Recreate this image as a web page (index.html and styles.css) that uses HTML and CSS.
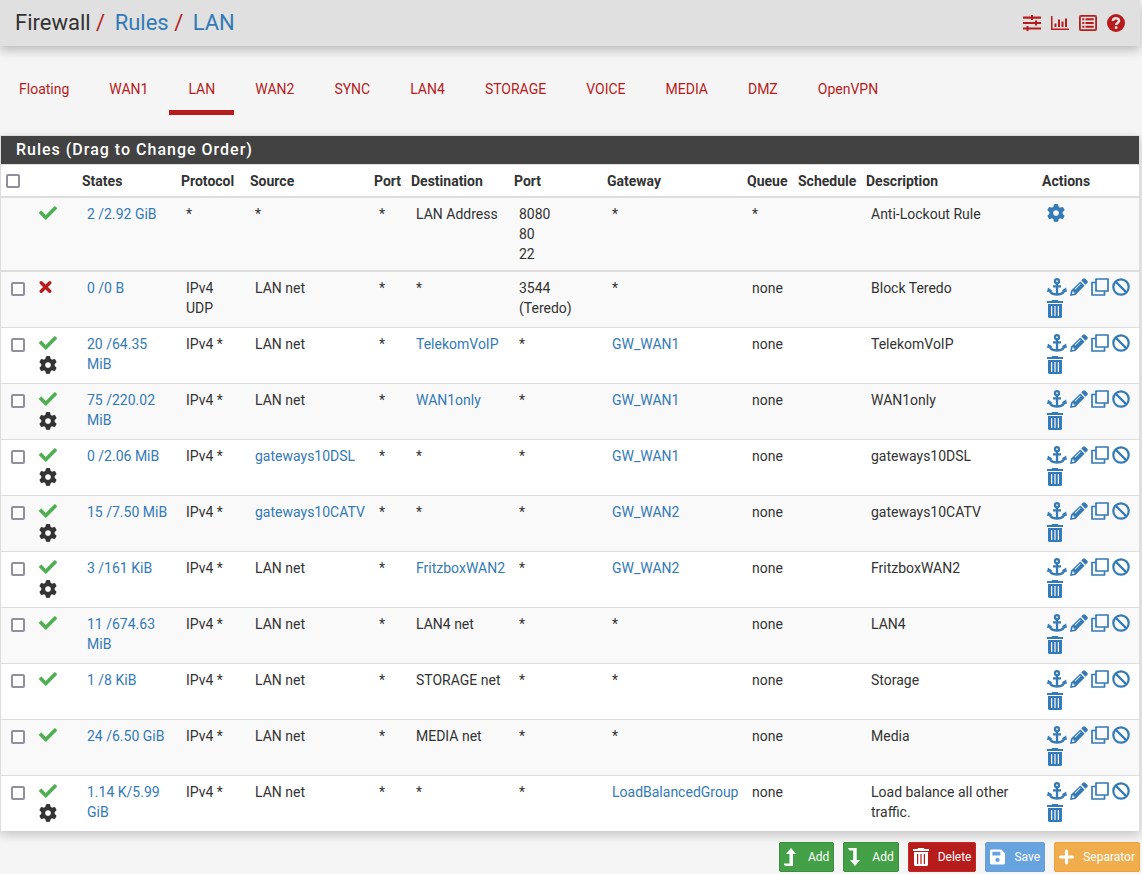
FILE: index.html
```html
<!DOCTYPE html>
<html lang="en">
<head>
<meta charset="utf-8">
<title>Firewall: Rules: LAN</title>
<link rel="stylesheet" href="styles.css">
</head>
<body>
<svg class="sprite" aria-hidden="true">
  <symbol id="check" viewBox="0 0 512 512"><path d="M173.898 439.404l-166.4-166.400c-9.997-9.997-9.997-26.206 0-36.204l36.203-36.204c9.997-9.998 26.207-9.998 36.204 0L192 312.690 432.095 72.596c9.997-9.997 26.207-9.997 36.204 0l36.203 36.204c9.997 9.997 9.997 26.206 0 36.204l-294.400 294.401c-9.998 9.997-26.207 9.997-36.204-.001z"/></symbol>
  <symbol id="times" viewBox="0 0 14 14"><path d="M2.400 2.400 11.600 11.600M11.600 2.400 2.400 11.600" fill="none" stroke="currentColor" stroke-width="3.600" stroke-linecap="round"/></symbol>
  <symbol id="gear" viewBox="0 0 512 512"><path d="M495.9 166.6c3.2 8.7 .5 18.4-6.4 24.6l-43.3 39.4c1.1 8.3 1.7 16.8 1.7 25.4s-.6 17.1-1.7 25.4l43.3 39.4c6.9 6.2 9.6 15.9 6.4 24.6c-4.4 11.9-9.7 23.3-15.8 34.3l-4.7 8.1c-6.6 11-14 21.4-22.1 31.2c-5.9 7.2-15.7 9.6-24.5 6.8l-55.7-17.7c-13.4 10.3-28.2 18.9-44 25.4l-12.5 57.1c-2 9.1-9 16.3-18.2 17.8c-13.8 2.3-28 3.5-42.5 3.5s-28.7-1.2-42.5-3.5c-9.2-1.5-16.2-8.7-18.2-17.8l-12.5-57.1c-15.8-6.5-30.6-15.1-44-25.4L83.1 425.9c-8.8 2.8-18.6 .3-24.5-6.8c-8.1-9.8-15.5-20.2-22.1-31.2l-4.7-8.1c-6.1-11-11.4-22.4-15.8-34.3c-3.2-8.7-.5-18.4 6.4-24.6l43.3-39.4C64.6 273.1 64 264.6 64 256s.6-17.1 1.7-25.4L22.4 191.2c-6.9-6.2-9.6-15.9-6.4-24.6c4.4-11.9 9.7-23.3 15.8-34.3l4.7-8.1c6.6-11 14-21.4 22.1-31.2c5.9-7.2 15.7-9.6 24.5-6.8l55.7 17.7c13.4-10.3 28.2-18.9 44-25.4l12.5-57.1c2-9.1 9-16.3 18.2-17.8C227.3 1.2 241.5 0 256 0s28.7 1.2 42.5 3.5c9.2 1.5 16.2 8.7 18.2 17.8l12.5 57.1c15.8 6.5 30.6 15.1 44 25.4l55.7-17.7c8.8-2.8 18.6-.3 24.5 6.8c8.1 9.8 15.5 20.2 22.1 31.2l4.7 8.1c6.1 11 11.4 22.4 15.8 34.3zM256 336a80 80 0 1 0 0-160 80 80 0 1 0 0 160z"/></symbol>
  <symbol id="anchor" viewBox="0 0 20 18"><g fill="none" stroke="currentColor" stroke-width="2.300"><circle cx="10" cy="3.200" r="2"/><path d="M10 5v11.500M6 8.300h8M2.300 11.500c.5 3 3.200 5 7.700 5s7.200-2 7.700-5"/></g><path d="M0 14 1 9.500l4.500 3.500zM20 14l-1-4.500-4.500 3.500z"/></symbol>
  <symbol id="pencil" viewBox="0 0 18 18"><path d="M13 .7a1.600 1.600 0 0 1 2.200 0l2.100 2.100a1.600 1.600 0 0 1 0 2.200L15.500 6.800 11.200 2.500zM10.300 3.400l4.300 4.300-9.200 9.200L0 18l1.100-5.400zM2.500 13.400 2 15.500l.5.500 2.100-.5v-1.100H3.600v-1zM5.300 11.600l5.500-5.500-.7-.7-5.500 5.500z" fill-rule="evenodd"/></symbol>
  <symbol id="clone" viewBox="0 0 18 18"><path d="M5 1h12v12H5zM4.500 4.500H1V17h12.500v-3.500" fill="none" stroke="currentColor" stroke-width="1.700" stroke-linejoin="round"/></symbol>
  <symbol id="ban" viewBox="0 0 18 18"><g fill="none" stroke="currentColor" stroke-width="2.200"><circle cx="9" cy="9" r="7.700"/><path d="m3.600 3.600 10.800 10.800"/></g></symbol>
  <symbol id="trash" viewBox="0 0 16 18"><path d="M4.500 1 5.200 0h5.600l.7 1H16v2H0V1zM1 4h14v12.500a1.500 1.500 0 0 1-1.500 1.500h-11A1.500 1.500 0 0 1 1 16.500zM4 6v10h1.200V6zM7.400 6v10h1.200V6zM10.800 6v10H12V6z" fill-rule="evenodd"/></symbol>
  <symbol id="sliders" viewBox="0 0 18 18"><path d="M0 2.500h8V1h2v1.500h8v2.200h-8V6H8V4.700H0zM0 7.900h12V6.500h2v1.400h4v2.200h-4v1.400h-2v-1.400H0zM0 13.400h3.500V12h2v1.400H18v2.200H5.500V17h-2v-1.400H0z"/></symbol>
  <symbol id="chart" viewBox="0 0 18 18"><path d="M0 2h1.500v12.500H18V16H0zM3.500 9.500h2V13h-2zM7 5.500h2V13H7zM10.500 7.500h2V13h-2zM14 4.500h2V13h-2z"/></symbol>
  <symbol id="list" viewBox="0 0 18 18"><rect x=".9" y="1.900" width="16.200" height="14.200" rx="1" fill="none" stroke="currentColor" stroke-width="1.800"/><path d="M3.300 4.200h2v2h-2zM6.500 4.200h8.200v2H6.500zM3.300 8h2v2h-2zM6.500 8h8.200v2H6.500zM3.300 11.800h2v2h-2zM6.500 11.800h8.200v2H6.500z"/></symbol>
  <symbol id="help" viewBox="0 0 18 18"><circle cx="9" cy="9" r="9"/><path d="M5.900 7C6 3.300 12 3.500 12 6.700c0 2.200-2.900 2.200-2.900 4.200" fill="none" stroke="#e0e0e0" stroke-width="2.500"/><path d="M7.800 12.300h2.600v2.500H7.800z" fill="#e0e0e0"/></symbol>
  <symbol id="up" viewBox="0 0 15 18"><path d="M7 0l5 6H9v12H1l-1.500-2.500H5.500V6H2z"/></symbol>
  <symbol id="down" viewBox="0 0 15 18"><path d="M0 0h8.700v12H12l-5 6-5-6h3.200V2.500H1.500z"/></symbol>
  <symbol id="save" viewBox="0 0 16 16"><path d="M1.500 0H12l4 4v10.500a1.500 1.500 0 0 1-1.500 1.500h-13A1.500 1.500 0 0 1 0 14.500v-13A1.500 1.500 0 0 1 1.500 0zM2.500 2.500v4H11v-4zM8 8.800a2.300 2.300 0 1 0 0 4.600 2.300 2.300 0 1 0 0-4.600z" fill-rule="evenodd"/></symbol>
  <symbol id="plus" viewBox="0 0 16 16"><path d="M8 1.800v12.400M1.800 8h12.400" fill="none" stroke="currentColor" stroke-width="3.400" stroke-linecap="round"/></symbol>
</svg>

<header class="topbar">
  <h1 class="crumbs">Firewall <span class="slash">/</span> <a href="#">Rules</a> <span class="slash">/</span> <a href="#">LAN</a></h1>
  <nav class="tools" aria-label="Page tools">
    <a href="#" aria-label="Settings"><svg><use href="#sliders"/></svg></a>
    <a href="#" aria-label="Status"><svg><use href="#chart"/></svg></a>
    <a href="#" aria-label="Logs"><svg><use href="#list"/></svg></a>
    <a href="#" aria-label="Help"><svg><use href="#help"/></svg></a>
  </nav>
</header>

<nav class="tabs" aria-label="Interfaces">
  <a href="#">Floating</a><a href="#">WAN1</a><a href="#" class="active" aria-current="page">LAN</a><a href="#">WAN2</a><a href="#">SYNC</a><a href="#">LAN4</a><a href="#">STORAGE</a><a href="#">VOICE</a><a href="#">MEDIA</a><a href="#">DMZ</a><a href="#">OpenVPN</a>
</nav>

<main>
  <section class="panel">
    <h2 class="panel-title">Rules (Drag to Change Order)</h2>
    <table class="rules">
      <colgroup><col class="c-check"><col class="c-icon"><col class="c-states"><col class="c-proto"><col class="c-source"><col class="c-port"><col class="c-dest"><col class="c-dport"><col class="c-gateway"><col class="c-queue"><col class="c-sched"><col class="c-desc"><col class="c-actions"></colgroup>
      <thead><tr><th><input type="checkbox" aria-label="Select all rules"></th><th></th><th>States</th><th>Protocol</th><th>Source</th><th>Port</th><th>Destination</th><th>Port</th><th>Gateway</th><th>Queue</th><th>Schedule</th><th>Description</th><th>Actions</th></tr></thead>
      <tbody class="fixed">
        <tr><td></td><td><svg class="ic pass"><use href="#check"/></svg></td><td><a href="#">2 /2.92 GiB</a></td><td>*</td><td>*</td><td>*</td><td>LAN Address</td><td>8080<br>80<br>22</td><td>*</td><td>*</td><td></td><td>Anti-Lockout Rule</td><td><a href="#" aria-label="Settings"><svg class="ic"><use href="#gear"/></svg></a></td></tr>
      </tbody>
      <tbody id="rows" class="sortable"></tbody>
    </table>
  </section>
  <div class="buttons">
    <button type="button" class="btn add"><svg><use href="#up"/></svg>Add</button>
    <button type="button" class="btn add"><svg><use href="#down"/></svg>Add</button>
    <button type="button" class="btn delete"><svg><use href="#trash"/></svg>Delete</button>
    <button type="button" class="btn save" disabled><svg><use href="#save"/></svg>Save</button>
    <button type="button" class="btn separator"><svg><use href="#plus"/></svg>Separator</button>
  </div>
</main>
<script src="rules.js"></script>
</body>
</html>
```
FILE: styles.css
```css
* { box-sizing: border-box; }
body { margin: 0; background: #f5f5f5; color: #333; font: 14px/20px Roboto, sans-serif; }
a { color: #337ab7; text-decoration: none; }
svg { fill: currentColor; }
.sprite { position: absolute; width: 0; height: 0; }

.topbar { display: flex; justify-content: space-between; align-items: center; height: 46px; margin-right: 2px; padding: 0 15px; background: #e0e0e0; box-shadow: 0 4px 10px rgba(0, 0, 0, .25); }
.crumbs { margin: 0; font-size: 22px; line-height: 24px; font-weight: 400; }
.slash { color: #b71c1c; margin-right: 4px; }
.tools { display: flex; gap: 10px; }
.tools a { display: flex; color: #b71c1c; }
.tools svg { width: 18px; height: 18px; }

.tabs { display: flex; flex-wrap: wrap; gap: 2px; padding: 23px 0 20px; }
.tabs a { padding: 10px 19px 11px; color: #b71c1c; border-bottom: 5px solid transparent; }
.tabs a.active { border-bottom-color: #b71c1c; }

.panel { margin: 0 2px 0 0; border: 1px solid #ddd; border-width: 1px 1px 0; background: #fff; box-shadow: 0 4px 10px rgba(0, 0, 0, .2); }
.panel-title { margin: 0; padding: 4px 15px; background: #424242; color: #fff; font-size: 16px; line-height: 20px; font-weight: 500; letter-spacing: 1px; }
.rules { width: 100%; table-layout: fixed; border-collapse: separate; border-spacing: 0; }
.rules th { padding: 6px 0 5px 5px; border-top: 1px solid #ddd; text-align: left; font-weight: 700; white-space: nowrap; }
.rules td { padding: 6px 3px 9px 10px; border-top: 1px solid #ddd; vertical-align: top; }
.rules .fixed td { padding-bottom: 6px; }
.rules tbody tr:first-child td { border-top-width: 2px; }
.fixed tr, .sortable tr:nth-child(odd) { background: #f9f9f9; }
.c-check { width: 28px; }
.c-icon { width: 48px; }
.c-states { width: 99px; }
.c-proto { width: 69px; }
.c-source { width: 124px; }
.c-port { width: 37px; }
.c-dest { width: 103px; }
.c-dport { width: 93px; }
.c-gateway { width: 140px; }
.c-queue { width: 51px; }
.c-sched { width: 68px; }
.c-actions { width: 102px; }
.rules input { display: block; width: 14px; height: 14px; margin: 4px 0 0; appearance: none; border: 2px solid #8f8f9d; border-radius: 2px; background: #fff; }
.rules th input { margin: 0; }
.rules input:checked { background: #337ab7; }
.ic { display: block; width: 18px; height: 18px; }
.pass { color: #4caf50; }
.block { color: #b71c1c; width: 13px; }
.state { display: flex; flex-direction: column; gap: 4px; }
.actions { display: flex; flex-wrap: wrap; gap: 4px 3px; }
.actions .anchor { width: 20px; }
.actions .trash { width: 16px; }

.buttons { display: flex; justify-content: flex-end; gap: 9px; padding: 11px 2px 2px 0; }
.btn { display: flex; align-items: center; gap: 9px; height: 30px; padding: 0 4px; border: 1px solid; border-radius: 2px; color: #fff; font: 12px/18px Roboto, sans-serif; }
.btn svg { width: 15px; height: 18px; }
.btn.delete svg { width: 16px; }
.add { background: #43a047; border-color: #3b8e3f; }
.delete { background: #b71c1c; border-color: #c62828; }
.save { background: #67a3df; border-color: #6a9fd0; }
.separator { background: #f0ad4e; border-color: #eea236; }
```
FILE: rules.js
```js
const rules = [
  ['times', false, '0 /0 B', 'IPv4<br>UDP', 'LAN net', '*', '3544<br>(Teredo)', '*', 'Block Teredo'],
  ['check', true, '20 /64.35 MiB', 'IPv4 *', 'LAN net', '@TelekomVoIP', '*', '@GW_WAN1', 'TelekomVoIP'],
  ['check', true, '75 /220.02 MiB', 'IPv4 *', 'LAN net', '@WAN1only', '*', '@GW_WAN1', 'WAN1only'],
  ['check', true, '0 /2.06 MiB', 'IPv4 *', '@gateways10DSL', '*', '*', '@GW_WAN1', 'gateways10DSL'],
  ['check', true, '15 /7.50 MiB', 'IPv4 *', '@gateways10CATV', '*', '*', '@GW_WAN2', 'gateways10CATV'],
  ['check', true, '3 /161 KiB', 'IPv4 *', 'LAN net', '@FritzboxWAN2', '*', '@GW_WAN2', 'FritzboxWAN2'],
  ['check', false, '11 /674.63 MiB', 'IPv4 *', 'LAN net', 'LAN4 net', '*', '*', 'LAN4'],
  ['check', false, '1 /8 KiB', 'IPv4 *', 'LAN net', 'STORAGE net', '*', '*', 'Storage'],
  ['check', false, '24 /6.50 GiB', 'IPv4 *', 'LAN net', 'MEDIA net', '*', '*', 'Media'],
  ['check', true, '1.14 K/5.99 GiB', 'IPv4 *', 'LAN net', '*', '*', '@LoadBalancedGroup', 'Load balance all other traffic.'],
];
// A leading @ marks an alias or gateway that links to its own page.
const cell = (t) => `<td>${t[0] === '@' ? `<a href="#">${t.slice(1)}</a>` : t}</td>`;
const icon = (name, cls = '') => `<svg class="ic ${cls}"><use href="#${name}"/></svg>`;
const actions = ['anchor', 'pencil', 'clone', 'ban', 'trash']
  .map((n) => `<a href="#" aria-label="${n}">${icon(n, n)}</a>`).join('');
document.getElementById('rows').innerHTML = rules.map(([kind, adv, states, proto, src, dst, port, gw, desc]) => `<tr>
  <td><input type="checkbox" aria-label="Select ${desc}"></td>
  <td><div class="state">${icon(kind, kind === 'check' ? 'pass' : 'block')}${adv ? icon('gear') : ''}</div></td>
  ${cell('@' + states)}${cell(proto)}${cell(src)}${cell('*')}${cell(dst)}${cell(port)}${cell(gw)}${cell('none')}<td></td>${cell(desc)}
  <td><div class="actions">${actions}</div></td></tr>`).join('');
```
